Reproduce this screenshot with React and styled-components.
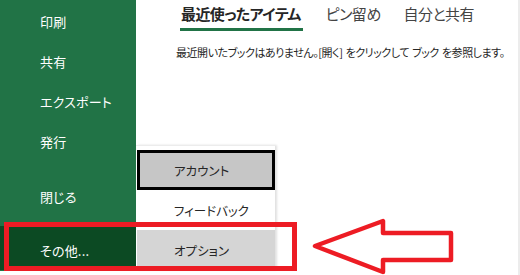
import React from 'react';
import styled, { createGlobalStyle } from 'styled-components';

const GlobalStyle = createGlobalStyle`
  html, body {
    margin: 0;
    padding: 0;
    background: #ffffff;
  }
  body {
    font-family: "Noto Sans CJK JP", "Noto Sans", sans-serif;
    font-feature-settings: "palt";
  }
`;

const Frame = styled.div`
  position: relative;
  display: flex;
  flex-direction: row;
  width: 520px;
  height: 275px;
  overflow: hidden;
  box-sizing: border-box;
  border-right: 2px solid #ececec;
  background: #ffffff;
`;

const Sidebar = styled.nav`
  display: flex;
  flex-direction: column;
  width: 136px;
  height: 271px;
  padding-top: 1px;
  box-sizing: border-box;
  background-color: #217346;
  flex-shrink: 0;
`;

const NavItem = styled.div`
  display: flex;
  align-items: center;
  height: ${({ $height }) => $height || 40}px;
  margin-top: ${({ $gap }) => $gap || 0}px;
  padding-left: 40px;
  padding-top: ${({ $active }) => ($active ? 4 : 0)}px;
  box-sizing: border-box;
  font-size: 13px;
  letter-spacing: 0.2px;
  color: #ffffff;
  background-color: ${({ $active }) => ($active ? '#0c4a23' : 'transparent')};
`;

const Main = styled.main`
  display: flex;
  flex-direction: column;
  flex: 1;
  min-width: 0;
  padding-left: 40px;
`;

const Tabs = styled.div`
  display: flex;
  flex-direction: row;
  gap: 23px;
  margin-left: 5px;
  margin-top: 4px;
  height: 27px;
`;

const Tab = styled.div`
  font-size: 15px;
  line-height: 20px;
  font-weight: ${({ $active }) => ($active ? 700 : 400)};
  color: ${({ $active }) => ($active ? '#262626' : '#444444')};
  letter-spacing: -0.6px;
  border-bottom: ${({ $active }) => ($active ? '3px solid #217346' : '3px solid transparent')};
  padding-bottom: 3px;
  padding-right: ${({ $active }) => ($active ? 2 : 0)}px;
  margin-left: ${({ $active }) => ($active ? -1 : 0)}px;
  padding-left: ${({ $active }) => ($active ? 1 : 0)}px;
`;

const Message = styled.p`
  margin: 13px 0 0 0;
  font-size: 11px;
  line-height: 16px;
  color: #262626;
  letter-spacing: -0.45px;
  word-spacing: 1px;
  white-space: pre;
`;

const Popup = styled.div`
  position: absolute;
  left: 136px;
  top: 145px;
  width: 139px;
  height: 125px;
  padding-top: 4px;
  box-sizing: border-box;
  background: #ffffff;
  border-top: 1px solid #ececec;
  box-shadow: 2px 0 2px rgba(0, 0, 0, 0.12);
  display: flex;
  flex-direction: column;
`;

const PopupItem = styled.div`
  display: flex;
  align-items: center;
  height: 40px;
  padding-left: ${({ $focused }) => ($focused ? 34 : 37)}px;
  margin-left: 1px;
  box-sizing: border-box;
  font-size: 12.5px;
  color: #262626;
  background-color: ${({ $bg }) => $bg || '#ffffff'};
  border: ${({ $focused }) => ($focused ? '3px solid #000000' : 'none')};
`;

const Highlight = styled.div`
  position: absolute;
  left: 4px;
  top: 222px;
  width: 293px;
  height: 49px;
  box-sizing: border-box;
  border: 5px solid #ed1c24;
  pointer-events: none;
`;

const Arrow = styled.svg`
  position: absolute;
  left: 308px;
  top: 215px;
  width: 150px;
  height: 62px;
  overflow: visible;
`;

const navItems = [
  { label: '印刷' },
  { label: '共有' },
  { label: 'エクスポート' },
  { label: '発行' },
  { label: '閉じる', gap: 15 },
];

export default function App() {
  return (
    <>
      <GlobalStyle />
      <Frame>
        <Sidebar>
          {navItems.map((item) => (
            <NavItem key={item.label} $gap={item.gap}>
              {item.label}
            </NavItem>
          ))}
          <NavItem $active $gap={10} $height={44}>その他...</NavItem>
        </Sidebar>
        <Main>
          <Tabs>
            <Tab $active>最近使ったアイテム</Tab>
            <Tab>ピン留め</Tab>
            <Tab>自分と共有</Tab>
          </Tabs>
          <Message>最近開いたブックはありません。[開く] をクリックして ブック を参照します。</Message>
        </Main>
        <Popup>
          <PopupItem $focused $bg="#c6c6c6">アカウント</PopupItem>
          <PopupItem>フィードバック</PopupItem>
          <PopupItem $bg="#d5d5d5">オプション</PopupItem>
        </Popup>
        <Highlight />
        <Arrow viewBox="308 215 150 62">
          <polygon
            points="315,246 383,221 383,233 451,233 451,260 383,260 383,272"
            fill="none"
            stroke="#ed1c24"
            strokeWidth="4.5"
            strokeLinejoin="round"
          />
        </Arrow>
      </Frame>
    </>
  );
}
